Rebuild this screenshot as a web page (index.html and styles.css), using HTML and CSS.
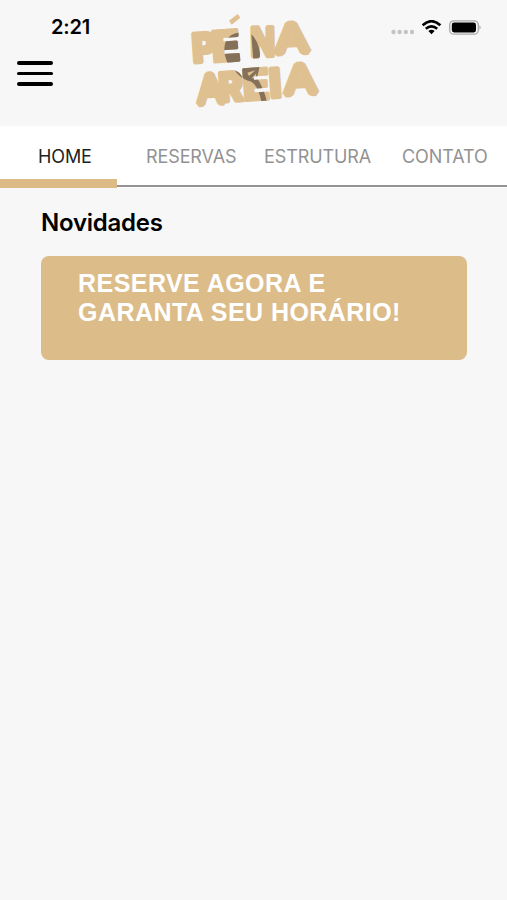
FILE: index.html
```html
<!DOCTYPE html>
<html lang="pt-BR">
<head>
  <meta charset="UTF-8">
  <meta name="viewport" content="width=device-width, initial-scale=1.0">
  <title>Pé na Areia</title>
  <link rel="stylesheet" href="styles.css">
</head>
<body>
  <header class="header">
    <div class="header-left">
      <span class="time">2:21</span>
      <button class="menu-btn" aria-label="Menu">
        <span></span>
        <span></span>
        <span></span>
      </button>
    </div>
    <svg class="logo" viewBox="0 0 450 330" role="img" aria-label="Pé na Areia">
      <g id="letters" class="logo-letters">
        <text class="thick" transform="translate(39 174) rotate(-4) scale(.92 1)">P</text>
        <text class="bars" transform="translate(97 173) rotate(-4) scale(1.08 1)">E</text>
        <text class="thick" transform="translate(212 155) rotate(-1) scale(.78 1)">N</text>
        <text class="peak" transform="translate(290 145) rotate(-3) scale(1.14 1)">A</text>
        <text class="peak" transform="translate(56 297) rotate(-4) scale(.92 1)">A</text>
        <text class="thick" transform="translate(119 292) rotate(-4) scale(.9 1)">R</text>
        <text class="bars" transform="translate(190 289) rotate(-4) scale(1.03 1)">E</text>
        <text class="thick" transform="translate(271 279) rotate(-4)">I</text>
        <text class="peak" transform="translate(317 268) rotate(-3) scale(1.1 1)">A</text>
      </g>
      <path class="logo-accent" d="M147 47L173 27L181 38L155 59Z"/>
      <!-- raquete -->
      <mask id="letters-mask">
        <use href="#letters" class="mask-fill"/>
      </mask>
      <g class="logo-racket" mask="url(#letters-mask)">
        <path d="M181 82Q134 88 133 132Q133 155 144 176H192V82Z"/>
        <path d="M214 88Q240 112 242 165H220Z"/>
        <path d="M160 188L239 184L231 219Q252 250 260 288L244 290Q236 244 214 230Q176 220 160 188Z"/>
        <path class="gap" d="M202 203L226 196L207 213ZM215 220L229 205L227 219Z"/>
      </g>
    </svg>
    <div class="status-icons">
      <svg width="91" height="20" viewBox="0 0 91 20">
        <g fill="#c4c4c4">
          <circle cx="3.5" cy="12" r="2.2"/>
          <circle cx="9.6" cy="12" r="2.2"/>
          <circle cx="15.8" cy="12" r="2.2"/>
          <circle cx="22" cy="12" r="2.2"/>
        </g>
        <g fill="none" stroke="#000" stroke-width="2.6">
          <path d="M32.6 5.2Q41.5-2.8 50.4 5.2"/>
          <path d="M35.8 8.7Q41.5 3.9 47.2 8.7"/>
        </g>
        <path d="M38.4 11Q41.5 8.7 44.6 11L41.5 14.2Z"/>
        <rect x="59.7" y="0.8" width="28.6" height="13.4" rx="4" fill="none" stroke="#aaa" stroke-width="1.3"/>
        <rect x="61.8" y="2.6" width="24.2" height="9.8" rx="2.3"/>
        <path d="M89.5 5.2Q91.6 7.4 89.5 9.8Z" fill="#999"/>
      </svg>
    </div>
  </header>

  <nav class="tabs">
    <a class="tab tab-home active">HOME</a>
    <a class="tab tab-reservas">RESERVAS</a>
    <a class="tab tab-estrutura">ESTRUTURA</a>
    <a class="tab tab-contato">CONTATO</a>
  </nav>

  <main class="content">
    <h1>Novidades</h1>
    <div class="banner">RESERVE AGORA E<br>GARANTA SEU HORÁRIO!</div>
  </main>
</body>
</html>
```

FILE: styles.css
```css
* {
  margin: 0;
  padding: 0;
  box-sizing: border-box;
}
body {
  font-family: Inter, 'Liberation Sans', sans-serif;
  background: #f7f7f7;
  color: #000;
  min-height: 100vh;
}
.header {
  display: grid;
  grid-template-columns: 180px 150px 1fr;
  height: 126px;
}
.header-left {
  padding: 15px 0 0 17px;
}
.time {
  display: block;
  margin-left: 34px;
  font-size: 20px;
  font-weight: 600;
  line-height: 25px;
  letter-spacing: -0.2px;
}
.menu-btn {
  display: flex;
  flex-direction: column;
  gap: 7px;
  margin-top: 21px;
  background: none;
  border: none;
}
.menu-btn span {
  width: 36px;
  height: 3.7px;
  border-radius: 2px;
  background: #000;
}
.logo {
  width: 150px;
  height: 110px;
  margin-top: 5px;
}
.logo-letters {
  fill: #dfc091;
  stroke: #dfc091;
  stroke-linejoin: bevel;
  font-family: Inter, sans-serif;
  font-weight: 900;
}
.thick {
  font-size: 122px;
  stroke-width: 10px;
}
.bars {
  font-size: 132px;
  stroke-width: 6px;
}
.peak {
  font-family: 'Liberation Sans', Arial, sans-serif;
  font-size: 124px;
  font-weight: 400;
  stroke-width: 20px;
}
.logo-accent {
  fill: #dfc091;
}
.mask-fill {
  filter: brightness(3);
}
.logo-racket {
  fill: #85705a;
}
.gap {
  fill: #dfc091;
}
.status-icons {
  padding: 20px 0 0 60px;
}
.tabs {
  display: grid;
  grid-template-columns: 117px 1fr 1fr 1fr;
  height: 62px;
  background: #fff;
}
.tab {
  display: flex;
  align-items: center;
  padding-top: 2px;
  border-bottom: 2px solid #949494;
  margin-bottom: 1px;
  font-size: 18px;
  line-height: 22px;
  letter-spacing: -0.1px;
  color: #929292;
}
.tab-home {
  padding-left: 38px;
}
.tab.active {
  color: #222;
  border-bottom: 9px solid #dcbb87;
  padding-top: 8px;
  margin-bottom: 0;
}
.tab-reservas {
  padding-left: 29px;
}
.tab-estrutura {
  padding-left: 17px;
}
.tab-contato {
  padding-left: 25px;
}
.content {
  padding: 20px 40px 0 41px;
}
h1 {
  font-size: 24px;
  font-weight: 600;
  line-height: 30px;
  letter-spacing: -0.25px;
}
.banner {
  height: 104px;
  margin-top: 18px;
  padding: 13px 37px;
  border-radius: 8px;
  background: #dcbc89;
  color: #fff;
  font-family: 'Liberation Sans', Arial, sans-serif;
  font-size: 25px;
  font-weight: 700;
  line-height: 29px;
  letter-spacing: 0.45px;
  white-space: nowrap;
}
```
